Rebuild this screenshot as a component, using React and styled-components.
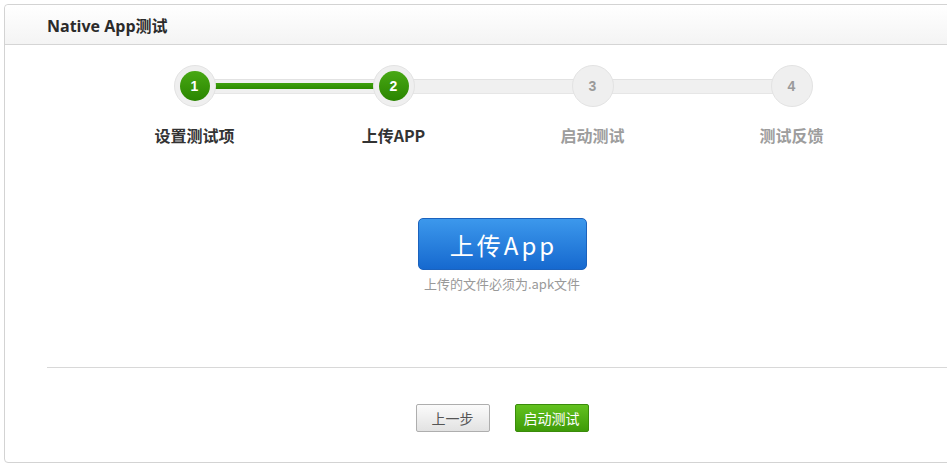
import React from 'react';
import styled, { createGlobalStyle } from 'styled-components';

const GlobalStyle = createGlobalStyle`
  html, body {
    margin: 0;
    padding: 0;
    background: #fff;
    overflow: hidden;
  }
  body {
    font-family: "Open Sans", "Noto Sans CJK SC", sans-serif;
    color: #333;
  }
`;

const Page = styled.div`
  padding: 4px;
`;

const Panel = styled.div`
  box-sizing: border-box;
  width: 996px;
  height: 459px;
  border: 1px solid #d3d3d3;
  border-radius: 4px;
  display: flex;
  flex-direction: column;
  background: #fff;
`;

const Header = styled.div`
  height: 39px;
  border-bottom: 1px solid #d5d5d5;
  border-radius: 4px 4px 0 0;
  background: linear-gradient(#ffffff, #f4f4f4);
  display: flex;
  align-items: center;
  padding-left: 42px;
  font-size: 16px;
  font-weight: 700;
  color: #2b2b2b;
`;

const Steps = styled.div`
  width: 796px;
  margin: 20px 0 0 90px;
`;

const RingRow = styled.div`
  display: flex;
  align-items: center;
  padding: 0 78.5px;
`;

const Ring = styled.div`
  position: relative;
  z-index: 1;
  box-sizing: border-box;
  width: 42px;
  height: 42px;
  border-radius: 50%;
  background: #efefef;
  border: 1px solid #e3e3e3;
  display: flex;
  align-items: center;
  justify-content: center;
`;

const Dot = styled.div`
  width: 30px;
  height: 30px;
  border-radius: 50%;
  display: flex;
  align-items: center;
  justify-content: center;
  font-family: "Liberation Sans", Arial, sans-serif;
  font-size: 14px;
  font-weight: 700;
  color: ${p => (p.$done ? '#fff' : '#9a9a9a')};
  background: ${p => (p.$done ? 'linear-gradient(#48a814, #2a8500)' : 'transparent')};
`;

const Connector = styled.div`
  flex: 1;
  height: 13px;
  margin: 0 -7px;
  background: #f0f0f0;
  border-top: 1px solid #e2e2e2;
  border-bottom: 1px solid #e6e6e6;
  display: flex;
  align-items: center;

  &::after {
    content: '';
    display: ${p => (p.$done ? 'block' : 'none')};
    height: 6px;
    width: 100%;
    background: linear-gradient(#3ea10d, #2c8a00);
  }
`;

const LabelRow = styled.div`
  display: grid;
  grid-template-columns: repeat(4, 199px);
  margin-top: 18px;
`;

const Label = styled.div`
  text-align: center;
  font-family: "Noto Sans CJK SC", sans-serif;
  font-size: 16px;
  line-height: 20px;
  font-weight: 700;
  color: ${p => (p.$active ? '#333' : '#9d9d9d')};
`;

const UploadArea = styled.div`
  margin-top: 73px;
  display: flex;
  flex-direction: column;
  align-items: center;
`;

const UploadButton = styled.button`
  box-sizing: border-box;
  width: 169px;
  height: 52px;
  border: 1px solid #1b62bd;
  border-radius: 5px;
  background: linear-gradient(#3c98ec, #1669cf);
  color: #fff;
  font-family: "Noto Sans CJK SC", sans-serif;
  font-size: 24px;
  letter-spacing: 3px;
  cursor: pointer;
  padding: 0 0 0 3px;
`;

const Hint = styled.div`
  margin-top: 6px;
  font-family: "Noto Sans CJK SC", sans-serif;
  font-size: 13px;
  line-height: 16px;
  color: #999;
`;

const Divider = styled.div`
  margin: 75px 42px 0;
  border-top: 1px solid #d8d8d8;
`;

const Actions = styled.div`
  margin-top: 36px;
  display: flex;
  justify-content: center;
  gap: 25px;
`;

const ActionButton = styled.button`
  box-sizing: border-box;
  width: 74px;
  height: 28px;
  border-radius: 2px;
  padding: 0;
  font-family: "Noto Sans CJK SC", sans-serif;
  font-size: 14px;
  cursor: pointer;
  border: 1px solid ${p => (p.$primary ? '#3a8c0a' : '#aeaeae')};
  color: ${p => (p.$primary ? '#fff' : '#555')};
  background: ${p =>
    p.$primary ? 'linear-gradient(#63c21f, #3e9b08)' : 'linear-gradient(#fbfbfb, #e2e2e2)'};
`;

const steps = ['设置测试项', '上传APP', '启动测试', '测试反馈'];
const current = 2;

export default function App() {
  return (
    <Page>
      <GlobalStyle />
      <Panel>
        <Header>Native App测试</Header>
        <Steps>
          <RingRow>
            {steps.map((s, i) => (
              <React.Fragment key={s}>
                {i > 0 && <Connector $done={i < current} />}
                <Ring>
                  <Dot $done={i < current}>{i + 1}</Dot>
                </Ring>
              </React.Fragment>
            ))}
          </RingRow>
          <LabelRow>
            {steps.map((s, i) => (
              <Label key={s} $active={i < current}>{s}</Label>
            ))}
          </LabelRow>
        </Steps>
        <UploadArea>
          <UploadButton>上传App</UploadButton>
          <Hint>上传的文件必须为.apk文件</Hint>
        </UploadArea>
        <Divider />
        <Actions>
          <ActionButton>上一步</ActionButton>
          <ActionButton $primary>启动测试</ActionButton>
        </Actions>
      </Panel>
    </Page>
  );
}
